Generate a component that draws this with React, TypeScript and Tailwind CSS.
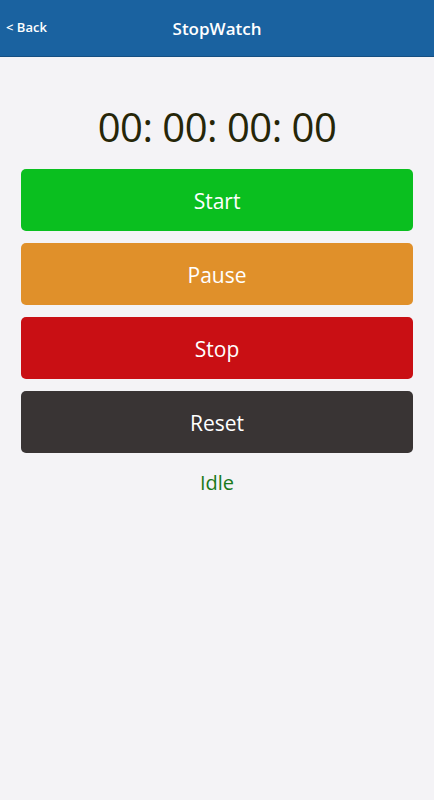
import React from "react";

export default function App() {
  const buttons = [
    { label: "Start", bg: "bg-[#0abf1f]" },
    { label: "Pause", bg: "bg-[#e0902a]" },
    { label: "Stop", bg: "bg-[#c90f14]" },
    { label: "Reset", bg: "bg-[#393434]" },
  ];
  return (
    <div
      className="w-[434px] h-[800px] bg-[#f4f3f6] flex flex-col"
      style={{ fontFamily: '"Open Sans", "Noto Sans", sans-serif' }}
    >
      <header className="relative h-[57px] bg-[#1a62a0] border-b border-[#154f82] flex items-center justify-center">
        <span className="absolute left-[6px] top-[17px] text-white text-[13px] font-semibold leading-[20px]">
          &lt; Back
        </span>
        <span className="text-white text-[17px] font-semibold leading-[24px] mt-[2px]">StopWatch</span>
      </header>
      <div className="flex flex-col items-center pt-[42px]">
        <div className="text-[#262608] text-[40px] leading-[56px] tracking-[-0.5px]">00: 00: 00: 00</div>
      </div>
      <div className="flex flex-col gap-[12px] px-[21px] mt-[14px]">
        {buttons.map((b) => (
          <button
            key={b.label}
            className={`${b.bg} h-[62px] rounded-[5px] text-white text-[21px] flex items-center justify-center pt-[3px]`}
          >
            {b.label}
          </button>
        ))}
      </div>
      <div className="text-center text-[#1a7a1a] text-[20px] mt-[16px] leading-[28px]">Idle</div>
    </div>
  );
}
